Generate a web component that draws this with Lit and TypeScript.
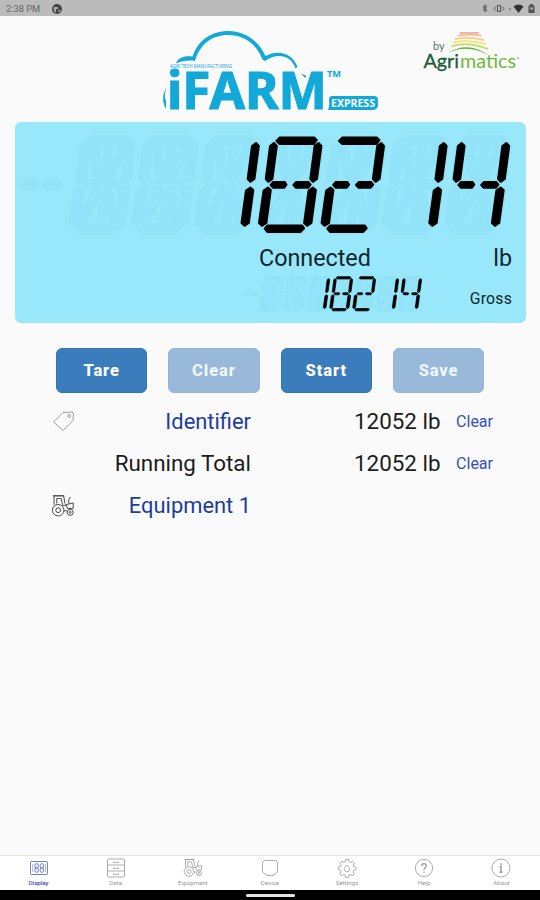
import { LitElement, html, svg, css, TemplateResult } from "lit";
import { customElement, property } from "lit/decorators.js";

/* Fourteen-segment glyph; every polygon shares one slanted cell. */
const SEG: Record<string, string> = {
  a: "20.8,19 24,15.6 58.5,15.6 61.2,18 58.5,22 24,22",
  f: "18.3,21 21.2,24 16.800,57 12.7,59.800 10.2,57 14.500,24",
  b: "63,21 65.8,24 61.400,57 57.3,59.800 54.7,57 59,24",
  g: "15,63 17.6,60 29.3,60 30.9,62.7 28.7,65.700 17.6,65.700",
  h: "37.800,63 40.6,60 52.800,60 55,62.7 52.7,65.700 40.4,65.700",
  e: "12.3,65.600 15.2,68 10.800,101 6.4,103.800 3.400,101 8,68.5",
  c: "57.3,65.600 60.3,68 55.800,101 51.5,103.800 48.500,101 53,68.500",
  d: "9.1,106.7 11.7,103.600 46.7,103.600 48.5,106.3 44.8,110 11.9,110",
  i: "24,25 29,25 31,50 30,57 26,50",
  j: "39,25 44,25 39,55 35,59 34,53",
  k: "53,25 57,25 53,38 42,57 39,57 42,45",
  l: "14,99 17,85 27,69 31,69 27,82 17,100",
  m: "31,100 34,72 37,68 39,73 36,100",
  n: "40,69 44,74 48,100 43,100 39,78",
};
const GLYPH: Record<string, string> = {
  " ": "", "1": "bc", "2": "abghed", "4": "fghbc", "8": "abcdefgh",
};
const ALL = Object.keys(SEG);
const PITCH = 62.6;
const ORIGIN = 47.8;

@customElement("segment-readout")
export class SegmentReadout extends LitElement {
  @property() value = "";
  static styles = css`
    :host { display: block; }
    svg { display: block; width: 100%; height: 100%; overflow: visible; }
    .ghost { fill: #83dcee; stroke: #83dcee; stroke-width: 5; stroke-linejoin: round; opacity: .27; }
    .on { fill: #000; stroke: #000; stroke-width: 2; stroke-linejoin: round; }
  `;
  render() {
    const cells = this.value.padStart(7, " ").split("");
    return html`<svg viewBox="0 0 493 122" preserveAspectRatio="none" role="img" aria-label=${this.value}>
      <g class="ghost">
        <polygon points="3,63 6,60.5 16,60.5 18,63 16,65.5 6,65.5"/>
        <polygon points="25,63 28,60.5 38,60.5 40,63 37,65.5 27,65.5"/>
        ${cells.map((_, i) => svg`<g transform="translate(${ORIGIN + i * PITCH} 0)">
          ${ALL.map((k) => svg`<polygon points=${SEG[k]}/>`)}</g>`)}
      </g>
      <g class="on">
        ${cells.map((c, i) => svg`<g transform="translate(${ORIGIN + i * PITCH} 0)">
          ${(GLYPH[c] ?? "").split("").map((k) => svg`<polygon points=${SEG[k]}/>`)}</g>`)}
      </g>
    </svg>`;
  }
}

const tractor = svg`
  <path d="M2.500 9V1.500h8l1.200 6.500M4.800 8V3.800h3.700L9.700 9M1.500 1.500h9.500"/>
  <circle cx="6" cy="13.500" r="4.800"/><circle cx="6" cy="13.500" r="2"/>
  <path d="M9.500 9.500h3.500l.5 2.500h5V7.500L12 9M14.800 8V4.500l1.500-2M10.800 14h2.500"/>
  <circle cx="16" cy="15.300" r="2.500"/><circle cx="16" cy="15.300" r=".8"/>`;

const ICONS: Record<string, TemplateResult> = {
  display: svg`<rect x="1.500" y="3.500" width="17" height="13" rx="1"/>
    <rect x="6" y="5.800" width="3.200" height="4.200" rx="1"/><rect x="6" y="10" width="3.200" height="4.200" rx="1"/>
    <rect x="11.200" y="5.800" width="3.200" height="4.200" rx="1"/><rect x="11.200" y="10" width="3.200" height="4.200" rx="1"/>
    <path d="M3.800 6v8M16.500 6v8" stroke-width=".5"/>`,
  data: svg`<rect x="1.500" y="1" width="17" height="18" rx=".8"/>
    <path d="M1.500 7h17M1.500 13h17M7.500 3.400v1h5v-1M7.500 9.400v1h5v-1M7.500 15.400v1h5v-1"/>`,
  equipment: tractor,
  device: svg`<path d="M4.500 2.500h11l2 2v9.500l-2 2h-1.500l-1 1.500h-6l-1-1.500H4.500l-2-2V4.500z"/>`,
  settings: svg`<path d="M8.500 1.500h3l.5 2.200 1.500.7 2-1.200 1.900 2-1.200 1.900.6 1.500 2.200.5v2.600l-2.200.6-.7 1.500 1.200 1.900-2 2-1.900-1.200-1.500.6-.5 2.200h-2.700l-.6-2.200-1.500-.6-1.900 1.200-2-2 1.200-1.900-.6-1.500L1.300 11.700V9.100l2.200-.5.7-1.500L3 5.200l2-2 1.900 1.200 1.500-.7z"/>
    <path d="M10 7c2 2 2.700 3 2.700 4.200a2.700 2.700 0 0 1-5.400 0C7.300 10 8 9 10 7z"/>`,
  help: svg`<circle cx="10" cy="10" r="8.600"/><path d="M7.800 8c0-3.200 4.500-3 4.500-.3C12.300 9.500 10 9.600 10 11.800M10 13.500v1.200" stroke-width="1.300"/>`,
  about: svg`<circle cx="10" cy="10" r="9"/><path d="M10 5.300v1.600M8.700 8.600H10v5.600M8.500 14.300h3" stroke-width="1.500"/>`,
};

const TABS = ["Display", "Data", "Equipment", "Device", "Settings", "Help", "About"];

@customElement("app-root")
export class AppRoot extends LitElement {
  static styles = css`
    :host { display: flex; flex-direction: column; width: 540px; height: 900px; overflow: hidden;
      background: #fafafa; font-family: Roboto, "Liberation Sans", sans-serif; color: #1c1c1c; }
    * { box-sizing: border-box; }
    .status { height: 16px; flex: none; background: #bbb; display: flex; align-items: center; padding: 1px 4px 0 6px;
      font-size: 9.300px; color: #666; }
    .status .clock { width: 45px; white-space: nowrap; }
    .status .right { margin-left: auto; }
    .status svg { display: block; }
    header { height: 106px; flex: none; display: flex; padding-left: 150px; }
    .brand { margin-top: 4px; width: 240px; height: 100px; flex: none; overflow: visible; }
    .maker { margin: 10px 0 0 28px; width: 110px; height: 50px; flex: none; }
    .panel { flex: none; margin: 0 14px 0 14.500px; height: 201px; border-radius: 6px; background: #99e7fb; color: #10262b;
      display: flex; flex-direction: column; padding: 0 14px 0 5px; }
    .main { width: 493px; height: 122px; flex: none; }
    .line { display: flex; justify-content: flex-end; align-items: center; height: 27px; font-size: 23.300px; }
    .line .state { width: 112px; white-space: nowrap; }
    .line .unit { width: 141px; text-align: right; }
    .sub { display: flex; justify-content: flex-end; align-items: center; height: 45px; }
    .small { width: 181px; height: 44.200px; }
    .gross { width: 89px; text-align: right; font-size: 15.800px; padding-top: 9px; letter-spacing: .2px; }
    .actions { flex: none; display: flex; gap: 21px; padding: 25px 0 0 56px; }
    button { width: 91.300px; height: 45px; border: 1px solid #3474b3; border-radius: 6px; background: #3b7dbc; color: #fff;
      font: 800 16.500px Roboto, sans-serif; letter-spacing: .9px; padding: 0; }
    button.off { background: #98b9da; border-color: #94b6d9; color: #f1f6fb; }
    .rows { flex: 1; display: grid; grid-template-columns: 75px 176px 189.500px 52.500px; grid-auto-rows: 42.300px; align-content: start;
      align-items: center; text-align: right; padding-top: 7px; font-size: 22.400px; white-space: nowrap; }
    .rows svg { justify-self: end; width: 24px; height: 24px; }
    .link { color: #1d3e9e; font-size: 21.900px; }
    .clear { color: #3550b8; font-size: 16px; }
    .ic { fill: none; stroke: currentColor; stroke-width: .8; }
    .dark { color: #444; }
    .tag { color: #858585; }
    nav { height: 35px; flex: none; display: flex; background: #fff; border-top: 1px solid #e1e1e1; }
    .tab { flex: 1; display: flex; flex-direction: column; align-items: center; color: #999; font-size: 6.200px; line-height: 8px;
      padding-top: 2px; gap: .500px; }
    .tab svg { width: 20px; height: 20px; }
    .tab.active { color: #4f63c0; -webkit-text-stroke: .2px; }
    .home { height: 10px; flex: none; background: #000; display: flex; justify-content: center; padding-top: 4px; }
    .pill { width: 49px; height: 3px; border-radius: 2px; background: #e4e4e4; }
  `;

  private brand() {
    return svg`<svg class="brand" viewBox="0 0 240 100" fill="#12a8d8" font-family="'Noto Sans', 'Open Sans', sans-serif" font-weight="700">
      <path d="M26 43.500C28 37 35 35.500 42.500 36.500C48 20 62 11 78 11C95 11 109 21 115.500 36C128 29 143 33 147.500 47L145.500 48.500C141 35 127 32.500 115 41L112.500 39.500C106 23 93 15 78 15C62 15 50 24 45 41C39 40 31 41 26 43.500Z"/>
      <text x="20" y="48" font-size="4.500" font-weight="400" textLength="62" lengthAdjust="spacingAndGlyphs">AGRI TECH MANUFACTURING</text>
      <text x="17" y="89.300" font-size="51.500" stroke="#12a8d8" stroke-width="1.100" textLength="160" lengthAdjust="spacingAndGlyphs">iFARM</text>
      <text x="177" y="57" font-size="8.500" font-weight="700" textLength="14" lengthAdjust="spacingAndGlyphs">TM</text>
      <path d="M17 67C12 74 12 82 16 89L16 81C14 77 15 71 17 67ZM151 53.500L156.500 56L155 58Z"/>
      <path d="M182 76H224Q228 76 228 80V85Q228 90 222 90H178Q180 84 179 80Q179 76 182 76Z"/>
      <text x="181" y="87.300" font-size="11" fill="#fafafa" textLength="44" lengthAdjust="spacingAndGlyphs">EXPRESS</text>
    </svg>`;
  }

  private maker() {
    return svg`<svg class="maker" viewBox="0 0 110 50" font-family="Lato, sans-serif" fill="none">
      <text x="15" y="24" font-size="11" fill="#56756b">by</text>
      <path d="M42 7H61" stroke="#e5a08e" stroke-width="1.500"/>
      <path d="M39.500 9.500Q52 8 63.500 9.500" stroke="#f6b58b" stroke-width="1.700"/>
      <path d="M37 13Q51 10.500 66 14" stroke="#f9ce7d" stroke-width="1.800"/>
      <path d="M35 16.500Q50 13 68 18" stroke="#f2e17c" stroke-width="1.800"/>
      <path d="M33 20.500Q50 15 70 23" stroke="#cbdc70" stroke-width="1.800"/>
      <path d="M30 27Q50 14 72 30Q50 17 30 27Z" fill="#62b33e"/>
      <text x="5.500" y="42" font-size="20" fill="#1c5b3a" stroke="#1c5b3a" stroke-width=".3" textLength="35.500" lengthAdjust="spacingAndGlyphs">Agri</text>
      <text x="42" y="42" font-size="20" fill="#70b83c" textLength="56" lengthAdjust="spacingAndGlyphs">matics</text>
      <circle cx="100" cy="32" r="1" stroke="#8fc565" stroke-width=".6"/>
    </svg>`;
  }

  render() {
    return html`
      <div class="status"><span class="clock">2:38 PM</span>
        <svg width="12" height="12" viewBox="0 0 12 12"><circle cx="6" cy="6" r="5" fill="#444"/><path d="M3 4h4v2H5v3.500A4 4 0 0 1 3 4z" fill="#aaa"/><path d="M7 7h3l-2 2.500z" fill="#aaa"/></svg>
        <svg class="right" width="58" height="13" viewBox="0 0 58 13" fill="none" stroke="#555">
          <path d="M4.500 4.500 9 8 6.800 9.800V2.800L9 4.600 4.500 8"/>
          <path d="M19.500 3.500h3v6h-3zM18 4.500l-2 2 2 2M24 4.500l2 2-2 2"/>
          <path d="M31 7h2"/><path d="M35.500 4.500Q40.500 .5 45.500 4.500L40.500 11z" fill="#333" stroke="none"/>
          <path d="M50.500 3.500H52V2h3v1.500h1.500V11h-6z" fill="#555" stroke="none"/><path d="M52 5.500h3v2h-3z" fill="#aaa" stroke="none"/>
        </svg>
      </div>
      <header>${this.brand()}${this.maker()}</header>
      <section class="panel">
        <segment-readout class="main" .value=${"18214"}></segment-readout>
        <div class="line"><span class="state">Connected</span><span class="unit">lb</span></div>
        <div class="sub"><segment-readout class="small" .value=${"18214"}></segment-readout><span class="gross">Gross</span></div>
      </section>
      <div class="actions">
        <button>Tare</button><button class="off">Clear</button><button>Start</button><button class="off">Save</button>
      </div>
      <div class="rows">
        <svg class="ic tag" viewBox="0 0 24 24"><path d="M2.500 13 12 3.500 21 3 22.500 4.500 22 11.500 12 21.500Z"/><circle cx="18" cy="6.800" r="1.500"/></svg>
        <span class="link">Identifier</span><span>12052 lb</span><span class="clear">Clear</span>
        <span></span><span>Running Total</span><span>12052 lb</span><span class="clear">Clear</span>
        <svg class="ic dark" viewBox="0 0 20 20">${tractor}</svg><span class="link">Equipment 1</span><span></span><span></span>
      </div>
      <nav>${TABS.map((t, i) => html`<div class="tab ${i === 0 ? "active" : ""}">
        <svg class="ic" viewBox="0 0 20 20">${ICONS[t.toLowerCase()]}</svg><span>${t}</span></div>`)}</nav>
      <div class="home"><div class="pill"></div></div>
    `;
  }
}
